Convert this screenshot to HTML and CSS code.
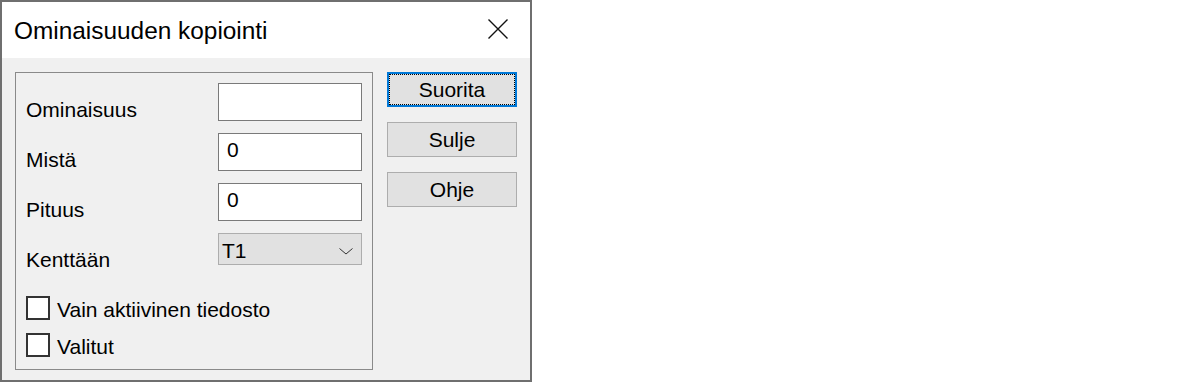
FILE: index.html
```html
<!DOCTYPE html>
<html lang="fi">
<head>
    <meta charset="UTF-8">
    <title>Ominaisuuden kopiointi</title>
    <link rel="stylesheet" href="styles.css">
</head>
<body>
    <div class="window">
        <div class="titlebar">
            <span class="title">Ominaisuuden kopiointi</span>
            <svg class="close" width="20" height="20" viewBox="0 0 20 20">
                <path d="M0.5 0.5 L19.5 19.5 M19.5 0.5 L0.5 19.5" stroke="#111" stroke-width="1.4" fill="none"/>
            </svg>
        </div>
        <div class="client">
            <div class="group">
                <div class="row">
                    <span class="label">Ominaisuus</span>
                    <div class="field"></div>
                </div>
                <div class="row">
                    <span class="label">Mistä</span>
                    <div class="field">0</div>
                </div>
                <div class="row">
                    <span class="label">Pituus</span>
                    <div class="field">0</div>
                </div>
                <div class="row">
                    <span class="label">Kenttään</span>
                    <div class="combo">
                        <span>T1</span>
                        <svg class="chevron" width="14" height="7" viewBox="0 0 14 7">
                            <path d="M0.5 0.5 L7 6 L13.5 0.5" stroke="#333" stroke-width="1" fill="none"/>
                        </svg>
                    </div>
                </div>
                <div class="checks">
                    <div class="check"><span class="box"></span><span class="check-text">Vain aktiivinen tiedosto</span></div>
                    <div class="check"><span class="box"></span><span class="check-text">Valitut</span></div>
                </div>
            </div>
            <div class="buttons">
                <div class="btn default">Suorita</div>
                <div class="btn">Sulje</div>
                <div class="btn">Ohje</div>
            </div>
        </div>
    </div>
</body>
</html>
```

FILE: styles.css
```css
body {
    margin: 0;
    background-color: #fff;
    font-family: "Liberation Sans", Arial, sans-serif;
    color: #000;
}

.window {
    width: 532px;
    height: 382px;
    box-sizing: border-box;
    border: 2px solid #6f6f6f;
    display: flex;
    flex-direction: column;
}

.titlebar {
    height: 56px;
    background-color: #fff;
    display: flex;
    justify-content: space-between;
    align-items: flex-start;
    padding: 0 22px 0 12px;
}

.title {
    font-size: 24.4px;
    line-height: 28px;
    margin-top: 15px;
}

.close {
    margin-top: 17px;
}

.client {
    flex: 1;
    background-color: #f0f0f0;
    display: flex;
    align-items: flex-start;
    gap: 14px;
    padding: 14px 0 0 13px;
    font-size: 21px;
    line-height: 24px;
}

.group {
    width: 358px;
    height: 298px;
    box-sizing: border-box;
    border: 1px solid #8a8a8a;
    padding: 10px 10px 0 10px;
}

.row {
    height: 50px;
    display: flex;
    justify-content: space-between;
    align-items: flex-start;
}

.label {
    padding-top: 15px;
}

.field {
    width: 144px;
    height: 38px;
    box-sizing: border-box;
    border: 1px solid #7a7a7a;
    background-color: #fff;
    padding: 4px 8px;
}

.combo {
    width: 144px;
    height: 32px;
    box-sizing: border-box;
    border: 1px solid #adadad;
    background-color: #e1e1e1;
    padding: 5px 8px 0 3px;
    display: flex;
    justify-content: space-between;
    align-items: flex-start;
}

.chevron {
    margin-top: 9px;
}

.checks {
    margin-top: 13px;
    display: flex;
    flex-direction: column;
    gap: 13px;
}

.check {
    height: 24px;
    display: flex;
    align-items: flex-start;
    gap: 7px;
}

.box {
    width: 24px;
    height: 24px;
    box-sizing: border-box;
    border: 2px solid #333;
    background-color: #fff;
}

.check-text {
    padding-top: 2px;
}

.buttons {
    display: flex;
    flex-direction: column;
    gap: 15px;
}

.btn {
    width: 130px;
    height: 35px;
    box-sizing: border-box;
    border: 1px solid #adadad;
    background-color: #e1e1e1;
    display: flex;
    justify-content: center;
    align-items: center;
}

.btn.default {
    border: 2px solid #0078d7;
    position: relative;
}

.btn.default::after {
    content: "";
    position: absolute;
    inset: 0;
    border: 1px dotted #000;
}
```
